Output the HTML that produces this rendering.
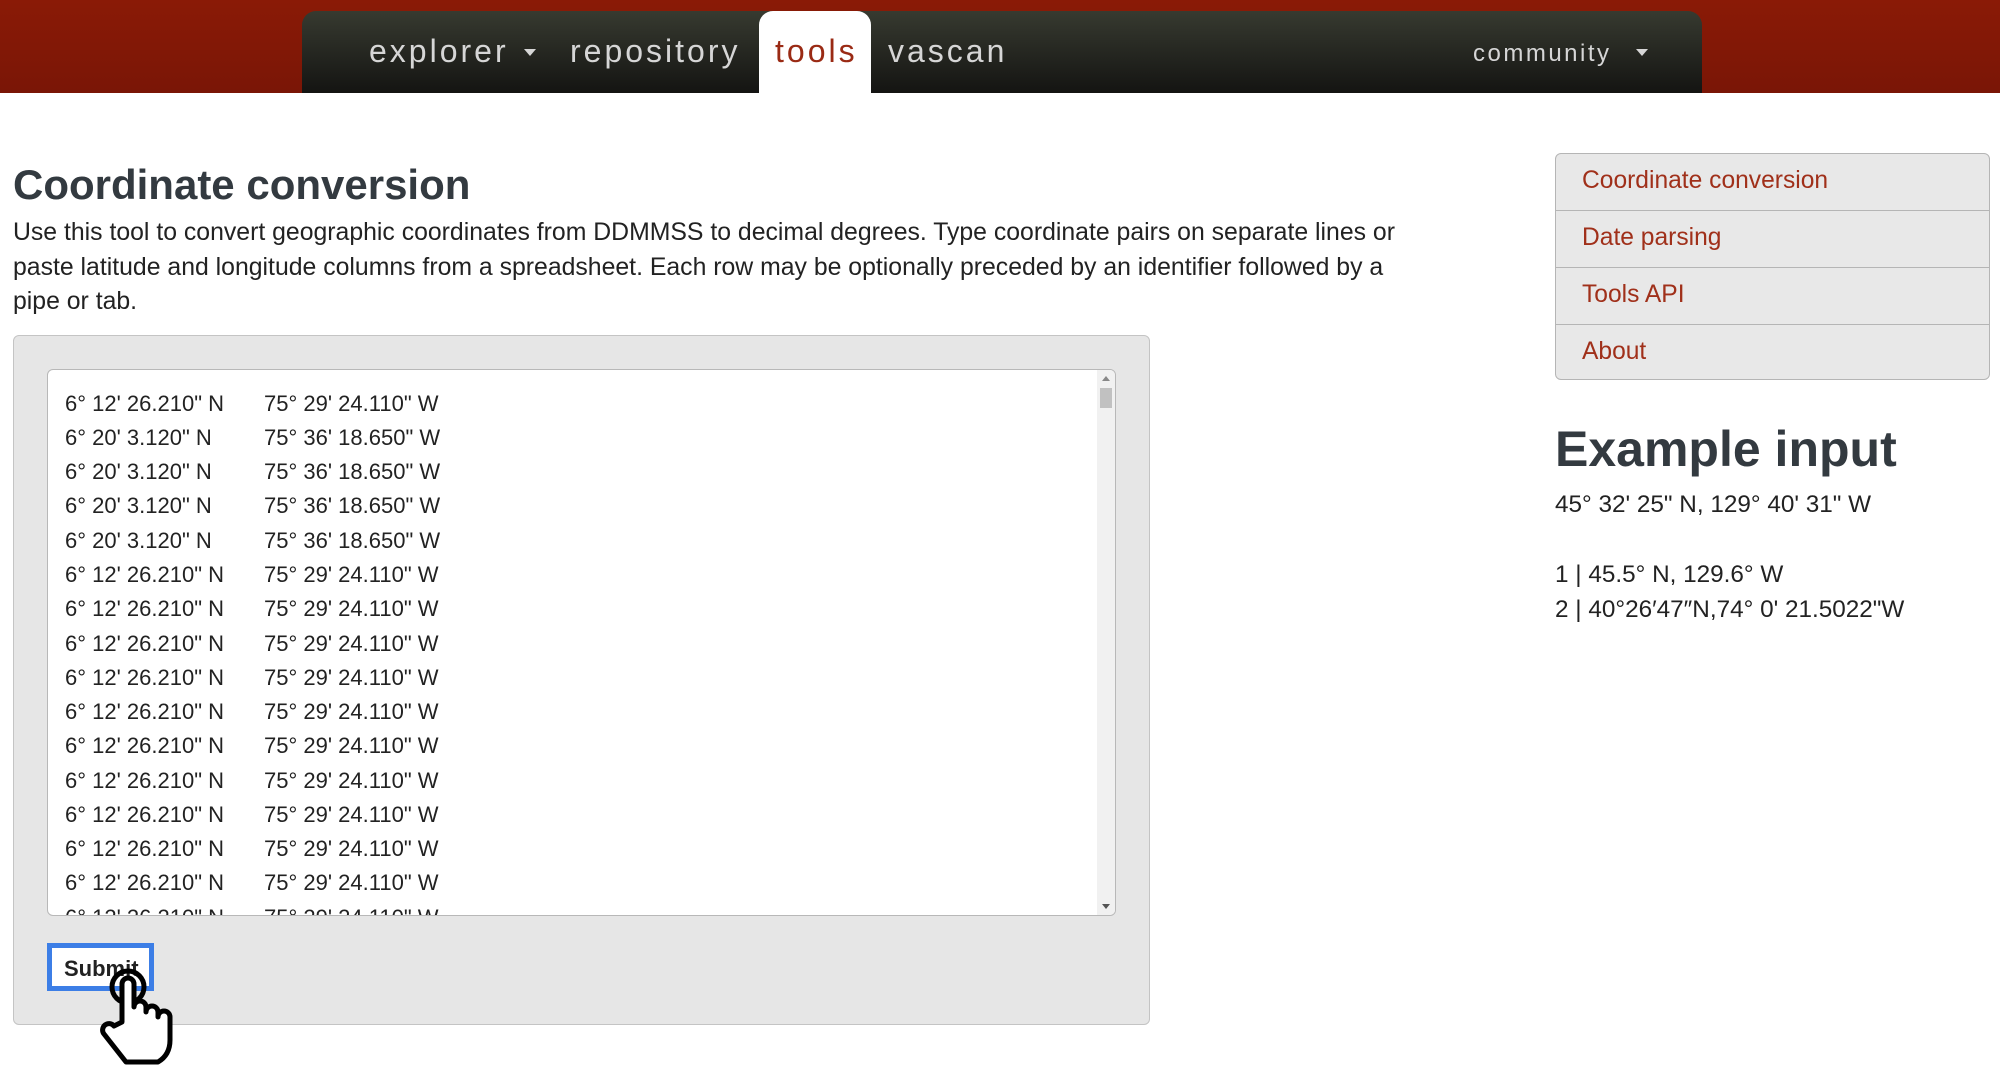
<!DOCTYPE html>
<html><head><meta charset="utf-8"><style>
*{margin:0;padding:0;box-sizing:border-box}
body{width:2000px;height:1065px;background:#fff;font-family:"Liberation Sans",Arial,sans-serif;position:relative;overflow:hidden}
.red{position:absolute;left:0;top:0;width:2000px;height:93px;background:linear-gradient(#8a1a06,#7a1606)}
.nav{position:absolute;left:302px;top:11px;width:1400px;height:82px;border-radius:14px 14px 0 0;background:linear-gradient(#373a30,#141412);}
.nav span{position:absolute;top:22px;font-family:"Liberation Sans Narrow","Liberation Sans",sans-serif;font-size:32px;color:#d6d6d6;letter-spacing:3px}
.tab{position:absolute;left:759px;top:11px;width:112px;height:82px;background:#fff;border-radius:14px 14px 0 0}
.tri{position:absolute;width:0;height:0;border-left:6px solid transparent;border-right:6px solid transparent;border-top:7px solid #d6d6d6}
h1{position:absolute;left:13px;top:161px;font-size:42px;color:#333a40;font-weight:bold}
.p{position:absolute;left:13px;top:216px;font-size:24.8px;line-height:34.5px;color:#222}
.panel{position:absolute;left:13px;top:335px;width:1137px;height:690px;background:#e6e6e6;border:1px solid #c4c4c4;border-radius:6px}
.ta{position:absolute;left:47px;top:369px;width:1069px;height:547px;background:#fff;border:1px solid #b8b8b8;border-radius:6px;overflow:hidden}
.row{position:absolute;left:17px;font-size:22px;color:#222;white-space:nowrap}
.row b{font-weight:normal;position:absolute;left:199px}
.sb{position:absolute;right:0;top:0;width:18px;height:100%;background:#f1f1f1}
.thumb{position:absolute;right:3px;top:18px;width:12px;height:20px;background:#c1c1c1}
.btn{position:absolute;left:47px;top:943px;width:107px;height:48px;border:5px solid #3c7ee6;background:#fff;font-weight:bold;font-size:22px;padding:8px 0 0 12px;color:#222}
.side{position:absolute;left:1555px;top:153px;width:435px;height:227px;background:#e8e8e8;border:1px solid #b5b5b5;border-radius:6px;overflow:hidden}
.side div{height:57px;border-bottom:1px solid #b5b5b5;font-size:24.6px;color:#a0301a;padding:13px 0 0 26px}
.side div:last-child{border:none}
h2{position:absolute;left:1555px;top:420px;font-size:50px;color:#333a40}
.ex{position:absolute;left:1555px;top:487px;font-size:24.3px;line-height:35px;color:#222}
</style></head><body>
<div class="red"></div>
<div class="nav">
<span style="left:67px">explorer</span><div class="tri" style="left:222px;top:38px"></div>
<span style="left:268px">repository</span>
<span style="left:586px">vascan</span>
<span style="left:1171px;font-size:24px;top:29px;letter-spacing:2.5px">community</span><div class="tri" style="left:1334px;top:38px"></div>
</div>
<div class="tab"><span style="position:absolute;left:16px;top:22px;font-family:'Liberation Sans Narrow','Liberation Sans',sans-serif;font-size:32px;color:#9a2a14;letter-spacing:3px">tools</span></div>
<h1>Coordinate conversion</h1>
<div class="p">Use this tool to convert geographic coordinates from DDMMSS to decimal degrees. Type coordinate pairs on separate lines or<br>paste latitude and longitude columns from a spreadsheet. Each row may be optionally preceded by an identifier followed by a<br>pipe or tab.</div>
<div class="panel"></div>
<div class="ta">
<div class="row" style="top:21px">6° 12' 26.210" N<b>75° 29' 24.110" W</b></div>
<div class="row" style="top:55px">6° 20' 3.120" N<b>75° 36' 18.650" W</b></div>
<div class="row" style="top:89px">6° 20' 3.120" N<b>75° 36' 18.650" W</b></div>
<div class="row" style="top:123px">6° 20' 3.120" N<b>75° 36' 18.650" W</b></div>
<div class="row" style="top:158px">6° 20' 3.120" N<b>75° 36' 18.650" W</b></div>
<div class="row" style="top:192px">6° 12' 26.210" N<b>75° 29' 24.110" W</b></div>
<div class="row" style="top:226px">6° 12' 26.210" N<b>75° 29' 24.110" W</b></div>
<div class="row" style="top:261px">6° 12' 26.210" N<b>75° 29' 24.110" W</b></div>
<div class="row" style="top:295px">6° 12' 26.210" N<b>75° 29' 24.110" W</b></div>
<div class="row" style="top:329px">6° 12' 26.210" N<b>75° 29' 24.110" W</b></div>
<div class="row" style="top:363px">6° 12' 26.210" N<b>75° 29' 24.110" W</b></div>
<div class="row" style="top:398px">6° 12' 26.210" N<b>75° 29' 24.110" W</b></div>
<div class="row" style="top:432px">6° 12' 26.210" N<b>75° 29' 24.110" W</b></div>
<div class="row" style="top:466px">6° 12' 26.210" N<b>75° 29' 24.110" W</b></div>
<div class="row" style="top:500px">6° 12' 26.210" N<b>75° 29' 24.110" W</b></div>
<div class="row" style="top:535px">6° 12' 26.210" N<b>75° 29' 24.110" W</b></div>
<div class="sb"><div style="position:absolute;left:5px;top:6px;border:4px solid transparent;border-bottom:5px solid #888;border-top:0"></div><div class="thumb"></div><div style="position:absolute;left:5px;bottom:6px;border:4px solid transparent;border-top:5px solid #555;border-bottom:0"></div></div>
</div>
<div class="btn">Submit</div>
<svg style="position:absolute;left:98px;top:962px" width="80" height="103" viewBox="0 0 80 103">
<circle cx="30" cy="25" r="16" fill="none" stroke="#000" stroke-width="5"/>
<path d="M24 60 V22 a6 6 0 0 1 12 0 V45 a6 6 0 0 1 12 0 V50 a6 6 0 0 1 12 0 V55 a6 6 0 0 1 12 0 V78 q0 15 -12 22 H28 L6 72 a6 6 0 0 1 10 -8 Z" fill="#fff" stroke="#000" stroke-width="5" stroke-linejoin="round"/>
</svg>
<div class="side"><div>Coordinate conversion</div><div>Date parsing</div><div>Tools API</div><div>About</div></div>
<h2>Example input</h2>
<div class="ex">45° 32' 25" N, 129° 40' 31" W<br><br>1 | 45.5° N, 129.6° W<br>2 | 40°26′47″N,74° 0' 21.5022"W</div>
</body></html>
